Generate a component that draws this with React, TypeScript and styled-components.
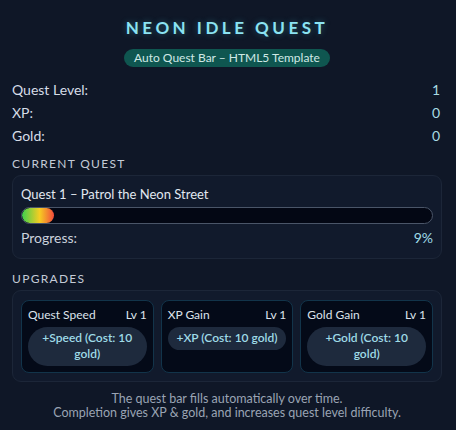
import React from "react";
import styled, { createGlobalStyle } from "styled-components";

const Global = createGlobalStyle`
  html, body { margin: 0; padding: 0; background: #0f1727; }
  body { font-family: Lato, "Open Sans", sans-serif; color: #d6dde8; }
  * { box-sizing: border-box; }
`;

const Page = styled.div`
  width: 456px;
  height: 430px;
  padding: 15px 14px 0 12px;
  display: flex;
  flex-direction: column;
`;

const Title = styled.h1`
  margin: 0;
  text-align: center;
  font-size: 17px;
  font-weight: 700;
  letter-spacing: 3.5px;
  color: #8be3f2;
  line-height: 26px;
  text-shadow: 0 0 6px rgba(80, 220, 240, 0.35);
`;

const BadgeRow = styled.div`
  display: flex;
  justify-content: center;
  margin-top: 8px;
`;

const Badge = styled.span`
  background: #0f5650;
  color: #cfe9e6;
  font-size: 12px;
  line-height: 18px;
  padding: 0 10.5px;
  border-radius: 999px;
`;

const Stats = styled.div`
  margin-top: 11px;
  display: flex;
  flex-direction: column;
`;

const StatRow = styled.div`
  display: flex;
  justify-content: space-between;
  font-size: 14px;
  line-height: 23px;
  padding-right: 2px;
`;

const StatValue = styled.span`
  color: #a9dbe4;
`;

const SectionLabel = styled.div<{ $gap?: number }>`
  font-size: 12px;
  letter-spacing: 1.3px;
  color: #c3cad6;
  line-height: 16px;
  margin-top: ${(p) => p.$gap ?? 9}px;
  margin-bottom: 3px;
`;

const Panel = styled.div`
  border: 1px solid #1c2638;
  border-radius: 9px;
  background: #111a2c;
  padding: 8px;
`;

const QuestName = styled.div`
  font-size: 13px;
  line-height: 20px;
  color: #e2e8f0;
`;

const Track = styled.div`
  margin-top: 3px;
  height: 17px;
  border-radius: 999px;
  border: 1px solid #4a5568;
  background: #030714;
  overflow: hidden;
`;

const Fill = styled.div`
  height: 100%;
  border-radius: 999px;
  background: linear-gradient(90deg, #3ccf4e 0%, #f6cd22 55%, #f24a3c 100%);
`;

const ProgressRow = styled.div`
  display: flex;
  justify-content: space-between;
  font-size: 14px;
  line-height: 20px;
  margin-top: 4px;
  margin-bottom: 2px;
  color: #cbd2dd;
`;

const Pct = styled.span`
  color: #9fdce8;
`;

const UpgradeGrid = styled.div`
  display: grid;
  grid-template-columns: repeat(3, 1fr);
  gap: 7px;
  padding-top: 1px;
`;

const Card = styled.div`
  background: #040a18;
  border: 1px solid #12344a;
  border-radius: 8px;
  padding: 5px 6px 6px 6px;
  display: flex;
  flex-direction: column;
  min-height: 72px;
`;

const CardHead = styled.div`
  display: flex;
  justify-content: space-between;
  font-size: 12px;
  line-height: 17px;
  color: #dde3ec;
`;

const BuyButton = styled.button`
  margin-top: 4px;
  border: none;
  border-radius: 999px;
  background: #1e2a3d;
  color: #9fdbe7;
  font-family: inherit;
  font-size: 12px;
  font-weight: 600;
  line-height: 16px;
  padding: 3px 4px 4px;
  text-align: center;
`;

const Footer = styled.div`
  margin-top: 10px;
  text-align: center;
  font-size: 12.5px;
  line-height: 14px;
  color: #9aa4b4;
`;

const upgrades = [
  { name: "Quest Speed", btn: "+Speed (Cost: 10 gold)" },
  { name: "XP Gain", btn: "+XP (Cost: 10 gold)" },
  { name: "Gold Gain", btn: "+Gold (Cost: 10 gold)" },
];

export default function App() {
  const progress = 9;
  return (
    <>
      <Global />
      <Page>
        <Title>NEON IDLE QUEST</Title>
        <BadgeRow>
          <Badge>Auto Quest Bar – HTML5 Template</Badge>
        </BadgeRow>
        <Stats>
          <StatRow><span>Quest Level:</span><StatValue>1</StatValue></StatRow>
          <StatRow><span>XP:</span><StatValue>0</StatValue></StatRow>
          <StatRow><span>Gold:</span><StatValue>0</StatValue></StatRow>
        </Stats>
        <SectionLabel>CURRENT QUEST</SectionLabel>
        <Panel>
          <QuestName>Quest 1 – Patrol the Neon Street</QuestName>
          <Track>
            <Fill style={{ width: `${progress * 0.88}%` }} />
          </Track>
          <ProgressRow><span>Progress:</span><Pct>{progress}%</Pct></ProgressRow>
        </Panel>
        <SectionLabel $gap={12}>UPGRADES</SectionLabel>
        <Panel>
          <UpgradeGrid>
            {upgrades.map((u) => (
              <Card key={u.name}>
                <CardHead><span>{u.name}</span><span>Lv 1</span></CardHead>
                <BuyButton>{u.btn}</BuyButton>
              </Card>
            ))}
          </UpgradeGrid>
        </Panel>
        <Footer>
          The quest bar fills automatically over time.
          <br />
          Completion gives XP &amp; gold, and increases quest level difficulty.
        </Footer>
      </Page>
    </>
  );
}
